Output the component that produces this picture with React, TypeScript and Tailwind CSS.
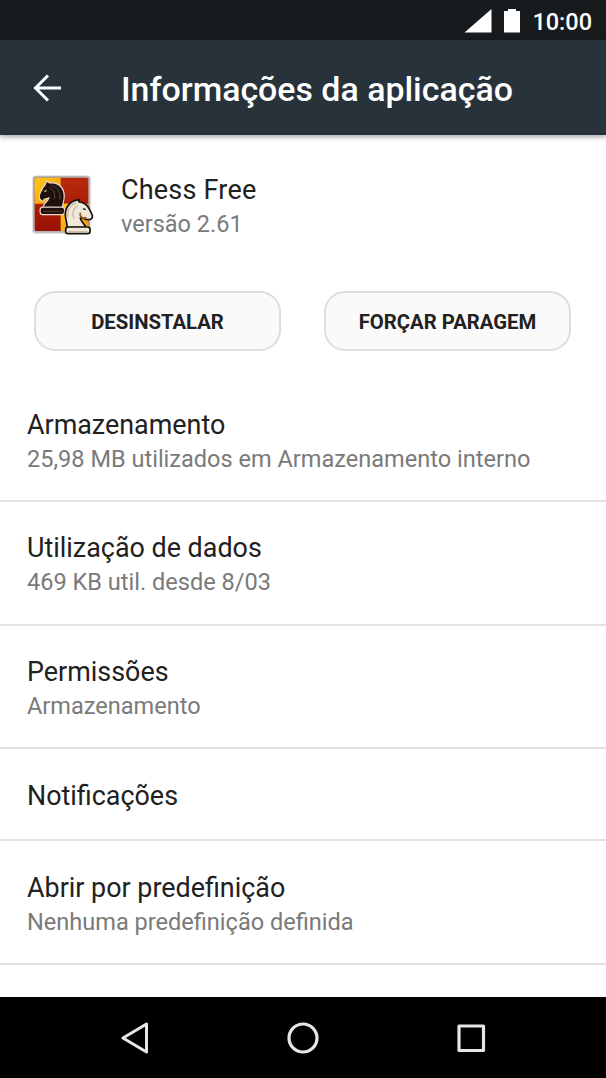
const items = [
  { title: "Armazenamento", summary: "25,98 MB utilizados em Armazenamento interno" },
  { title: "Utilização de dados", summary: "469 KB util. desde 8/03" },
  { title: "Permissões", summary: "Armazenamento" },
  { title: "Notificações" },
  { title: "Abrir por predefinição", summary: "Nenhuma predefinição definida" },
];

const StatusBar = () => {
  return (
    <div className="flex h-[40px] shrink-0 items-center justify-end bg-[#171b1e] pt-px pr-[14px] text-white">
      <svg className="mr-3 h-6 w-7" viewBox="0 0 28 24">
        <path d="M27.500 0V23.500H0.500Z" fill="#fff" />
      </svg>
      <svg className="mr-3 h-6 w-4" viewBox="0 0 16 24">
        <path d="M4 0h8v2h4v21.500H0V2h4Z" fill="#fff" />
      </svg>
      <span className="pt-[2px] text-[23.5px] leading-7 font-medium">10:00</span>
    </div>
  );
};

const ChessIcon = () => {
  return (
    <svg className="h-20 w-[90px]" viewBox="0 0 270 240">
      <defs>
        <linearGradient id="red" x1="0" y1="0" x2="0" y2="1">
          <stop offset="0" stopColor="#b92a0c" />
          <stop offset="1" stopColor="#9c1204" />
        </linearGradient>
        <linearGradient id="gold" x1="0" y1="0" x2="1" y2="1">
          <stop offset="0" stopColor="#ffc81c" />
          <stop offset="1" stopColor="#f59a08" />
        </linearGradient>
      </defs>
      <rect x="36" y="31" width="178" height="176" rx="12" fill="#888" opacity=".25" />
      <rect x="39" y="33" width="171" height="170" rx="9" fill="#888" opacity=".5" />
      <rect x="44" y="38" width="161" height="160" rx="5" fill="url(#red)" />
      <path d="M49 38h73v78H44V43Z" fill="url(#gold)" />
      <path d="M122 116h83v82h-83Z" fill="url(#gold)" />
      {/* black knight */}
      <g stroke="#eadbd2" strokeWidth="7" strokeLinejoin="round" fill="#1e110d" paintOrder="stroke">
        <path d="M80 51l10 5c24-4 41 14 41 37 0 14-5 23-6 36H70c1-13 17-18 19-34-6 4-12 3-17 6l-5 6-7-7c-2-12 4-18 9-28 3-8 9-9 11-21Z" />
        <rect x="62" y="128" width="70" height="19" rx="7" />
      </g>
      <path d="M94 61c18 5 28 20 26 42M88 67c14 8 19 20 14 36" fill="none" stroke="#5a443a" strokeWidth="3" />
      <path d="M69 139h56" stroke="#563a30" strokeWidth="3" />
      <path d="M73 80l7-4" stroke="#cfac91" strokeWidth="4" />
      {/* white knight */}
      <g stroke="#17110c" strokeWidth="5" strokeLinejoin="round" fill="#f0e9da">
        <path d="M178 104l-2 6c17 2 27 11 33 24l8 17c2 8-5 14-14 13-8 0-13-6-22-5 0 12 14 15 16 29h-56c2-13-6-25-5-42 1-23 17-40 42-42Z" />
        <rect x="137" y="186" width="73" height="20" rx="7" />
      </g>
      <path d="M169 114c-20 7-29 23-25 44M174 121c-15 10-19 23-12 39" fill="none" stroke="#c9bda5" strokeWidth="4" />
      <path d="M181 143c-2 8 1 13 8 17l10-2" fill="none" stroke="#8c5a22" strokeWidth="5" />
      <path d="M189 131l8 3" stroke="#21150e" strokeWidth="4" />
      <path d="M145 200h57" stroke="#c9bda5" strokeWidth="4" />
    </svg>
  );
};

const AppHeader = () => {
  return (
    <div className="flex h-[156px] pt-[30px] pl-5">
      <ChessIcon />
      <div className="ml-[11px] pt-2">
        <h2 className="text-[27px] leading-[34px] tracking-[0.2px] text-[#212121]">Chess Free</h2>
        <p className="text-[23.5px] leading-[34px] text-[#7a7a7a]">versão 2.61</p>
      </div>
    </div>
  );
};

const App = () => {
  return (
    <div className="flex h-[1078px] w-[606px] flex-col overflow-hidden bg-white font-[Roboto,sans-serif]">
      <StatusBar />
      <header className="z-10 flex h-[95px] shrink-0 items-center bg-[#28323a] pl-[33px] text-white shadow-[0_2px_5px_rgba(0,0,0,0.35)]">
        <svg className="h-7 w-7" viewBox="0 0 28 28" fill="none" stroke="#fff" strokeWidth="3">
          <path d="M28 14H4M15 1.500L2.500 14l12.500 12.500" />
        </svg>
        <h1 className="ml-[60px] pt-1 text-[33.9px] leading-10 font-medium">Informações da aplicação</h1>
      </header>
      <main className="grow overflow-hidden">
        <AppHeader />
        <div className="flex gap-[43px] px-[34px] text-[20.3px] font-bold text-[#212121]">
          <button className="h-[60px] w-[247px] rounded-[21px] border-2 border-[#dedede] bg-[#fafafa] pt-0.5">DESINSTALAR</button>
          <button className="h-[60px] w-[247px] rounded-[21px] border-2 border-[#dedede] bg-[#fafafa] pt-0.5">FORÇAR PARAGEM</button>
        </div>
        <ul className="pt-[27px]">
          {items.map((item) => (
            <li
              key={item.title}
              className={`border-b-2 border-[#e2e2e2] px-[27px] pt-[29.7px] ${item.summary ? "h-[123.8px]" : "h-[91.7px]"}`}
            >
              <p className="text-[26.9px] leading-[34px] text-[#212121]">{item.title}</p>
              {item.summary && <p className="text-[23.55px] leading-[34px] text-[#7a7a7a]">{item.summary}</p>}
            </li>
          ))}
        </ul>
      </main>
      <nav className="flex h-[81px] shrink-0 items-center justify-between bg-black px-[119px]">
        <svg className="h-8 w-8" viewBox="0 0 32 32" fill="none" stroke="#e6e6e6" strokeWidth="3" strokeLinejoin="round">
          <path d="M27.500 2v28L4 16Z" />
        </svg>
        <svg className="h-8 w-8" viewBox="0 0 32 32" fill="none" stroke="#e6e6e6" strokeWidth="3.2">
          <circle cx="16" cy="16" r="14" />
        </svg>
        <svg className="h-8 w-8" viewBox="0 0 32 32" fill="none" stroke="#e6e6e6" strokeWidth="3.2" strokeLinejoin="round">
          <rect x="4" y="4" width="24.500" height="24.500" />
        </svg>
      </nav>
    </div>
  );
};

export default App;
